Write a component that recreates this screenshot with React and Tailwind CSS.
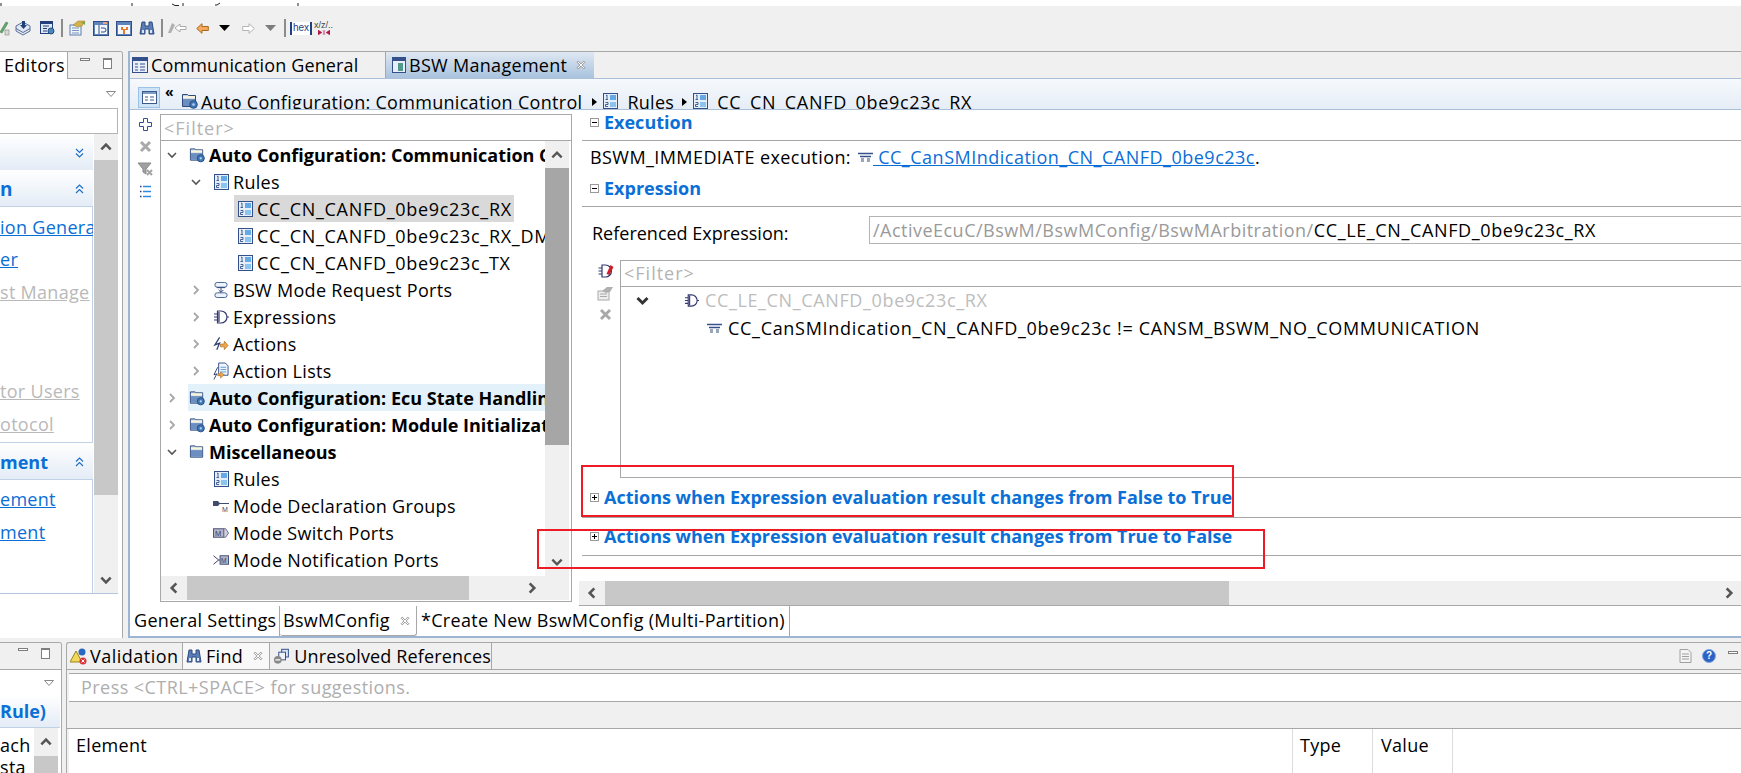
import React from "react";

const Chev = ({ d = "down", c = "#555", s = 2, w = 12 }) => {
  const p = { down: "M2 4l4 4 4-4", up: "M2 8l4-4 4 4", left: "M8 2L4 6l4 4", right: "M4 2l4 4-4 4" }[d];
  return <svg width={w} height={w} viewBox="0 0 12 12"><path d={p} fill="none" stroke={c} strokeWidth={s} /></svg>;
};
const Rules = () => (
  <svg width="15" height="16" viewBox="0 0 15 16"><rect x=".5" y=".5" width="14" height="15" fill="#e6eef8" stroke="#34508a" /><rect x="7" y="2" width="6" height="5" fill="#63a9e6" /><rect x="7" y="9" width="6" height="5" fill="#8cc4f0" /><path d="M3 2.500l1-.5v4M2.500 6.500h2.500M2.500 9.500h2.500v2h-2.500v2h2.500" fill="none" stroke="#34508a" strokeWidth=".9" /></svg>
);
const FolderGear = ({ gear = true }) => (
  <svg width="17" height="16" viewBox="0 0 17 16"><path d="M1.500 1.500v12h13v-11h-7l-1-1z" fill="#b9cee8" stroke="#2f4a7c" /><rect x="2" y="3" width="12" height="2.500" fill="#f6f3de" /><rect x="2" y="6" width="12" height="7" fill="#6c8fc2" />{gear && <><circle cx="12.500" cy="11.500" r="3.800" fill="#3f78b5" stroke="#2a4c80" /><circle cx="12.500" cy="11.500" r="1.200" fill="#b9d4ef" /></>}</svg>
);
const Gate = ({ c = "#34386e", w = 16 }) => (
  <svg width={w} height={w} viewBox="0 0 16 16"><path d="M4.500 2h3.500a6 6 0 010 12h-3.500zM6 3v10M1 5h3.500M1 8h3.500M1 11h3.500M14 8h2" fill="none" stroke={c} strokeWidth="1.200" /></svg>
);
const Bus = () => (
  <svg width="15" height="12" viewBox="0 0 15 12"><path d="M0 2.500h15M2 5.500h11" stroke="#36508a" strokeWidth="1.300" /><rect x="3" y="7" width="3" height="4" fill="#9aa7b8" /><rect x="9" y="7" width="3" height="4" fill="#9aa7b8" /></svg>
);
const ModeReq = () => (
  <svg width="17" height="18" viewBox="0 0 17 18"><rect x="2" y="1" width="13" height="5" rx="2.500" fill="#eef4fb" stroke="#3f5d90" /><rect x="2" y="12" width="13" height="5" rx="2.500" fill="#eef4fb" stroke="#3f5d90" /><path d="M4 6.500h9M8.500 7v4M6 9l2.500 2.500L11 9" fill="none" stroke="#2a3f70" /></svg>
);
const ActionIcon = () => (
  <svg width="17" height="16" viewBox="0 0 17 16"><path d="M7 1L2 9l5-2-3 7" fill="none" stroke="#2c3f72" strokeWidth="1.300" /><path d="M8 8h4V5l4 4.500-4 4.500v-3H8z" fill="#f0a848" stroke="#a86a20" strokeWidth=".7" /></svg>
);
const ActionList = () => (
  <svg width="17" height="20" viewBox="0 0 17 20"><path d="M6 1.500h7l3 3v10H6z" fill="#f2f6fb" stroke="#35508a" /><path d="M8 6h6M8 8.500h6M8 11h6" stroke="#4f9ad8" /><path d="M5 6L1 14l3-1-3 6" fill="none" stroke="#2c3f72" /><path d="M5 13h3v-2l4 3-4 3.500V15H5z" fill="#f0a848" stroke="#a86a20" strokeWidth=".6" /></svg>
);
const ModeGroup = () => (
  <svg width="16" height="14" viewBox="0 0 16 14"><path d="M0 2h5l2 2.500L5 7H0z" fill="#424a70" /><path d="M6 4.500h10" stroke="#424a70" /><text x="9" y="13" fontSize="7" fill="#424a70" fontFamily="Liberation Sans">M</text></svg>
);
const ModeSwitch = () => (
  <svg width="17" height="12" viewBox="0 0 17 12"><rect x=".5" y="1.500" width="11" height="9" fill="#b4b6c8" stroke="#444a70" /><text x="2.200" y="9" fontSize="8" fill="#333a60" fontFamily="Liberation Sans">M</text><path d="M11.500 1.500h2l3 4.500-3 4.500h-2z" fill="#cfd0dc" stroke="#6a6e8c" /></svg>
);
const ModeNotif = () => (
  <svg width="17" height="12" viewBox="0 0 17 12"><path d="M.5 1.500L6 6 .5 10.500M6 6h2" fill="none" stroke="#333a60" /><rect x="7.500" y="1.500" width="9" height="9" fill="#b4b6c8" stroke="#444a70" /><text x="8.500" y="9" fontSize="7" fill="#333a60" fontFamily="Liberation Sans">M</text></svg>
);
const Plus = () => (
  <svg width="13" height="13" viewBox="0 0 13 13"><path d="M4.500 .5h4v4h4v4h-4v4h-4v-4h-4v-4h4z" fill="#fff" stroke="#33518f" /></svg>
);
const Cross = ({ w = 13 }) => (
  <svg width={w} height={w} viewBox="0 0 13 13"><path d="M2 2l9 9M11 2l-9 9" stroke="#a9a9a9" strokeWidth="3" /></svg>
);
const Funnel = () => (
  <svg width="17" height="14" viewBox="0 0 17 14"><path d="M1 1h13L9 7v5L6 10V7z" fill="#a0a0a0" stroke="#8a8a8a" /><path d="M10 8l5 5M15 8l-5 5" stroke="#a4a4a4" strokeWidth="2" /></svg>
);
const ListIcon = () => (
  <svg width="11" height="13" viewBox="0 0 11 13"><path d="M3 1.500h8M3 6.500h8M3 11.500h8" stroke="#2f8ae0" strokeWidth="1.600" /><path d="M0 1.500h1.500M0 6.500h1.500M0 11.500h1.500" stroke="#1d3d80" strokeWidth="1.600" /></svg>
);
const CloseX = () => (
  <svg width="10" height="10" viewBox="0 0 9 9"><path d="M1 2l1-1 2.500 2.500L7 1l1 1-2.500 2.500L8 7 7 8 4.500 5.500 2 8 1 7l2.500-2.500z" fill="#fff" stroke="#7c7c7c" strokeWidth=".7" /></svg>
);
const Min = () => <div className="w-[10px] h-[3px] border border-[#7e7e7e] bg-white" />;
const Max = () => <div className="w-[9px] h-[11px] border border-[#7e7e7e] border-t-2 bg-white" />;
const TriDown = ({ c = "#000", w = 11, h = 6 }) => (
  <svg width={w} height={h} viewBox="0 0 11 6"><path d="M0 0h11L5.500 6z" fill={c} /></svg>
);
const HollowTri = () => (
  <svg width="10" height="6" viewBox="0 0 10 6"><path d="M.5.5h9L5 5.500z" fill="#fff" stroke="#888" /></svg>
);
const TreeBox = ({ sign }) => (
  <div className="w-[9px] h-[9px] border border-[#9a9a9a] bg-white flex items-center justify-center relative shrink-0">
    <div className="w-[5px] h-px bg-black" />
    {sign === "+" && <div className="absolute w-px h-[5px] bg-black" />}
  </div>
);
const Binoculars = () => (
  <svg width="16" height="15" viewBox="0 0 16 15"><path d="M3 1h3v4h4V1h3l2 12h-5V8H6v5H1z" fill="#5a7db5" stroke="#2f4a80" /><rect x="3" y="9" width="2" height="3" fill="#dbe6f4" /><rect x="11" y="9" width="2" height="3" fill="#dbe6f4" /></svg>
);

const TBSep = ({ ml }) => <div className={`w-[2px] h-[18px] bg-[#8c8c8c] shrink-0 ${ml}`} />;
const Slot = ({ w, ml = "", children }) => <div className={`flex justify-center items-center shrink-0 ${w} ${ml}`}>{children}</div>;

const Toolbar = () => (
  <div className="h-[44px] flex items-center bg-[#f0f0f0] shrink-0">
    <Slot w="w-[10px]"><svg width="10" height="16" viewBox="0 0 10 16"><path d="M0 12L6 2l2 1-6 10z" fill="#64a86c" stroke="#3f7d48" strokeWidth=".6" /><rect x="5" y="10" width="4" height="5" fill="#d8d8d8" stroke="#888" strokeWidth=".6" /></svg></Slot>
    <Slot w="w-[26px]"><svg width="16" height="16" viewBox="0 0 16 16"><path d="M1 6l7-4 7 4v5l-7 4-7-4z" fill="#dfe7f3" stroke="#5a6f99" /><path d="M1 8.500l7 4 7-4" fill="none" stroke="#5a6f99" /><path d="M7 1h3v4h2L8.500 9 5 5h2z" fill="#20407a" /></svg></Slot>
    <Slot w="w-[22px]"><svg width="15" height="14" viewBox="0 0 15 14"><rect x=".5" y=".5" width="12" height="12" fill="#dfe8f5" stroke="#24407c" /><rect x="1" y="1" width="11" height="2" fill="#24407c" /><path d="M3 5h6M3 7.500h4M3 10h4" stroke="#24407c" /><circle cx="11" cy="10" r="3" fill="#4d86bd" stroke="#24507f" /></svg></Slot>
    <TBSep ml="ml-[3px]" />
    <Slot w="w-[23px]" ml="ml-[3px]"><svg width="17" height="16" viewBox="0 0 17 16"><rect x="1" y="5" width="11" height="10" fill="#eef3fa" stroke="#5c7cae" /><path d="M3 8h7M3 10.500h7M3 13h7" stroke="#7d98bf" /><path d="M4 5l5-4h7l-3 5-4 1z" fill="#d2b04e" stroke="#a88a2c" strokeWidth=".6" /><path d="M12 2h4v3z" fill="#76a24a" /></svg></Slot>
    <Slot w="w-[23px]"><svg width="16" height="15" viewBox="0 0 16 15"><rect x=".5" y=".5" width="15" height="14" fill="#5f83bb" stroke="#2f4e86" /><rect x="2" y="4" width="12" height="9" fill="#f3f7fc" /><path d="M6 4v9M8 7h3a2 2 0 010 4H8" fill="none" stroke="#2f4e86" /><rect x="10" y="1" width="4" height="2" fill="#e8a47c" /></svg></Slot>
    <Slot w="w-[23px]"><svg width="16" height="15" viewBox="0 0 16 15"><rect x=".5" y=".5" width="15" height="14" fill="#5f83bb" stroke="#2f4e86" /><rect x="2" y="4" width="12" height="9" fill="#f3f7fc" /><path d="M5 6v3h2v4h2V9h3V6h-2v2H7V6z" fill="#e8792a" /></svg></Slot>
    <Slot w="w-[23px]"><Binoculars /></Slot>
    <TBSep ml="ml-[3px]" />
    <Slot w="w-[28px]"><svg width="20" height="14" viewBox="0 0 20 14"><path d="M1 12L5 2l3 2-4 8z" fill="#b0b0b0" /><path d="M8 7l5-4v2.500h6v3h-6V11z" fill="#fff" stroke="#aaa" /></svg></Slot>
    <Slot w="w-[22px]"><svg width="13" height="11" viewBox="0 0 13 11"><path d="M.7 5.500L6 .7v2.800h6.300v4H6v2.800z" fill="#f6a95a" stroke="#a86a20" /></svg></Slot>
    <Slot w="w-[22px]"><TriDown /></Slot>
    <Slot w="w-[26px]"><svg width="13" height="11" viewBox="0 0 13 11"><path d="M12.300 5.500L7 .7v2.800H.7v4H7v2.800z" fill="#fff" stroke="#b4b4b4" /></svg></Slot>
    <Slot w="w-[18px]"><TriDown c="#7d7d7d" /></Slot>
    <TBSep ml="ml-[5px]" />
    <Slot w="w-[30px]"><div className="h-[13px] px-[1px] bg-white border-x-2 border-[#1f3f7f] text-[#1f3f7f] text-[10px] leading-[12px] tracking-normal font-['Liberation_Sans',sans-serif]">hex</div></Slot>
    <Slot w="w-[15px]"><div className="flex flex-col items-center"><span className="text-[9px] leading-[9px] tracking-normal text-[#444] font-['Liberation_Sans',sans-serif] whitespace-nowrap">x/z/..</span><svg width="12" height="5" viewBox="0 0 12 5"><path d="M0 0l4 2.500L0 5zM12 0L8 2.500 12 5zM5 0l2 5M7 0L5 5" fill="#b01848" stroke="#b01848" strokeWidth=".5" /></svg></div></Slot>
  </div>
);

const Header = ({ children, chev = "up" }) => (
  <div className="h-[36px] pt-[2px] bg-gradient-to-b from-white to-[#e4ecf6] flex items-center relative shrink-0 font-bold tracking-normal text-[#0a6fd6]">
    <span className="whitespace-nowrap">{children}</span>
    <svg className="absolute right-[9px]" width="9" height="10" viewBox="0 0 9 10">{chev === "up"
      ? <path d="M1 4.500l3.500-3.500L8 4.500M1 9l3.500-3.500L8 9" fill="none" stroke="#1f6fc8" strokeWidth="1.200" />
      : <path d="M1 1l3.500 3.500L8 1M1 5.500L4.500 9 8 5.500" fill="none" stroke="#1f6fc8" strokeWidth="1.200" />}</svg>
  </div>
);

const LLink = ({ gray, children, cls = "" }) => (
  <div className={`whitespace-nowrap underline leading-[24px] ${gray ? "text-[#b9b9b9]" : "text-[#0b6ed6]"} ${cls}`}>{children}</div>
);

const LeftPanel = () => (
  <div className="w-[123px] shrink-0 border-r border-t border-[#a8a8a8] rounded-tr-[3px] flex flex-col bg-white overflow-hidden">
    <div className="h-[27px] flex items-center bg-[#f0f0f0] relative shrink-0">
      <div className="w-[68px] h-full bg-white border-r border-[#a8a8a8] pl-[4px] leading-[26px] whitespace-nowrap">Editors</div>
      <div className="flex-1 h-full border-b border-[#a8a8a8] flex items-start gap-[13px] pl-[12px] pt-[6px]"><Min /><Max /></div>
    </div>
    <div className="h-[29px] shrink-0 flex justify-end items-center pr-[6px]"><HollowTri /></div>
    <div className="h-[26px] w-[118px] border border-[#b4b4b4] border-l-0 shrink-0 bg-white" />
    <div className="w-[118px] h-[460px] flex border-b border-[#b4c6dc] shrink-0">
      <div className="w-[93px] flex flex-col overflow-hidden">
        <Header chev="down"> </Header>
        <Header chev="up"><span className="text-[19px]">n</span></Header>
        <div className="h-[237px] border-y border-r border-[#c0d2e6] pt-[8px] shrink-0">
          <LLink>ion Genera</LLink>
          <LLink cls="mt-[8px]">er</LLink>
          <LLink gray cls="mt-[9px]">st Manage</LLink>
          <LLink gray cls="mt-[75px]">tor Users</LLink>
          <LLink gray cls="mt-[9px]">otocol</LLink>
        </div>
        <Header chev="up"><span>ment</span></Header>
        <div className="flex-1 border-t border-r border-[#c0d2e6] pt-[7px]">
          <LLink>ement</LLink>
          <LLink cls="mt-[9px]">ment</LLink>
        </div>
      </div>
      <div className="w-[24px] ml-px bg-[#f0f0f0] flex flex-col">
        <div className="h-[26px] flex items-center justify-center"><Chev d="up" s={2.200} w={14} /></div>
        <div className="h-[335px] bg-[#c8c8c8]" />
        <div className="flex-1 flex items-end justify-center pb-[6px]"><Chev d="down" s={2.200} w={14} /></div>
      </div>
    </div>
    <div className="flex-1" />
  </div>
);

const Row = ({ pl, arrow, icon, text, bold, hl, id }) => (
  <div className={`h-[27px] flex items-center whitespace-nowrap shrink-0 ${pl}`}>
    <div className="w-[16px] flex justify-center shrink-0">
      {arrow === "open" && <Chev d="down" c="#555" s={1.600} w={12} />}
      {arrow === "closed" && <Chev d="right" c="#a8a8a8" s={1.800} w={12} />}
    </div>
    <div className={`flex items-center h-full ${hl === "row" ? "bg-[#e3f1fb] flex-1 pl-[1px] ml-[8px]" : hl === "text" ? "bg-[#d9d9d9] w-[280px] pl-[3px] ml-[6px]" : "ml-[9px]"}`}>
      <div className="flex justify-center shrink-0 w-[16px]">{icon}</div>
      <div className={`h-full leading-[29px] ml-[4px] ${bold ? "font-bold tracking-normal" : ""} ${id ? "tracking-[0.7px]" : ""}`}>{text}</div>
    </div>
  </div>
);

const Tree = () => (
  <div className="flex-1 min-w-0 overflow-hidden flex flex-col">
    <Row pl="pl-[3px]" arrow="open" icon={<FolderGear />} text="Auto Configuration: Communication Control" bold />
    <Row pl="pl-[27px]" arrow="open" icon={<Rules />} text="Rules" />
    <Row pl="pl-[51px]" icon={<Rules />} text="CC_CN_CANFD_0be9c23c_RX" hl="text" id />
    <Row pl="pl-[51px]" icon={<Rules />} text="CC_CN_CANFD_0be9c23c_RX_DM" id />
    <Row pl="pl-[51px]" icon={<Rules />} text="CC_CN_CANFD_0be9c23c_TX" id />
    <Row pl="pl-[27px]" arrow="closed" icon={<ModeReq />} text="BSW Mode Request Ports" />
    <Row pl="pl-[27px]" arrow="closed" icon={<Gate />} text="Expressions" />
    <Row pl="pl-[27px]" arrow="closed" icon={<ActionIcon />} text="Actions" />
    <Row pl="pl-[27px]" arrow="closed" icon={<ActionList />} text="Action Lists" />
    <Row pl="pl-[3px]" arrow="closed" icon={<FolderGear />} text="Auto Configuration: Ecu State Handling" bold hl="row" />
    <Row pl="pl-[3px]" arrow="closed" icon={<FolderGear />} text="Auto Configuration: Module Initialization" bold />
    <Row pl="pl-[3px]" arrow="open" icon={<FolderGear gear={false} />} text="Miscellaneous" bold />
    <Row pl="pl-[27px]" icon={<Rules />} text="Rules" />
    <Row pl="pl-[27px]" icon={<ModeGroup />} text="Mode Declaration Groups" />
    <Row pl="pl-[27px]" icon={<ModeSwitch />} text="Mode Switch Ports" />
    <Row pl="pl-[27px]" icon={<ModeNotif />} text="Mode Notification Ports" />
  </div>
);

const MasterPane = () => (
  <div className="w-[450px] shrink-0 flex pt-[4px]">
    <div className="w-[30px] shrink-0 flex flex-col items-center pt-[4px] gap-[9px]">
      <Plus /><Cross /><Funnel /><ListIcon />
    </div>
    <div className="w-[412px] h-[488px] border border-[#a8a8a8] flex flex-col">
      <div className="h-[26px] border-b border-[#a8a8a8] pl-[3px] text-[#b4b4b4] tracking-[1px] leading-[27px] shrink-0">&lt;Filter&gt;</div>
      <div className="flex h-[435px] pr-[2px] shrink-0">
        <Tree />
        <div className="w-[24px] bg-[#f0f0f0] flex flex-col shrink-0">
          <div className="h-[27px] flex items-center justify-center"><Chev d="up" s={2} w={14} /></div>
          <div className="h-[277px] bg-[#a6a6a6]" />
          <div className="flex-1 flex items-end justify-center pb-[7px]"><Chev d="down" s={2} w={14} /></div>
        </div>
      </div>
      <div className="h-[24px] bg-[#f0f0f0] flex items-center mr-[2px] shrink-0">
        <div className="w-[26px] flex justify-center"><Chev d="left" s={2.200} w={14} /></div>
        <div className="w-[282px] h-full bg-[#c8c8c8]" />
        <div className="flex-1 flex justify-end pr-[30px]"><Chev d="right" s={2.200} w={14} /></div>
      </div>
    </div>
  </div>
);

const SecHead = ({ sign, h, children }) => (
  <div className={`${h} border-b border-[#a6a6a6] flex items-center pl-[8px] shrink-0`}>
    <TreeBox sign={sign} />
    <span className="ml-[5px] font-bold tracking-normal text-[#0a6fd6] whitespace-nowrap">{children}</span>
  </div>
);

const DetailPane = () => (
  <div className="flex-1 min-w-0 flex flex-col">
    <div className="h-[471px] pl-[2px] flex flex-col shrink-0 overflow-hidden">
      <SecHead sign="-" h="h-[31px] pb-[6px]">Execution</SecHead>
      <div className="h-[32px] flex items-center pl-[8px] whitespace-nowrap shrink-0">
        <span className="tracking-[0.42px]">BSWM_IMMEDIATE execution:</span>
        <span className="ml-[7px]"><Bus /></span>
        <a className="underline text-[#0b6ed6] whitespace-pre tracking-[0.5px]"> CC_CanSMIndication_CN_CANFD_0be9c23c</a>
        <span>.</span>
      </div>
      <SecHead sign="-" h="h-[34px] pb-[3px]">Expression</SecHead>
      <div className="h-[37px] flex items-end pl-[10px] shrink-0">
        <span className="w-[277px] leading-[20px] mb-[1px] shrink-0 whitespace-nowrap tracking-normal">Referenced Expression:</span>
        <div className="flex-1 h-[28px] border-y border-l border-[#b4b4b4] pl-[3px] leading-[26px] whitespace-nowrap text-[#9a9a9a] tracking-[0.48px]">/ActiveEcuC/BswM/BswMConfig/BswMArbitration/<span className="text-black tracking-[0.63px]">CC_LE_CN_CANFD_0be9c23c_RX</span></div>
      </div>
      <div className="flex mt-[16px] shrink-0">
        <div className="w-[38px] shrink-0 flex flex-col items-center pl-[8px] pt-[3px] gap-[7px]">
          <svg width="17" height="16" viewBox="0 0 16 16"><path d="M4.500 2h3.500a6 6 0 010 12h-3.500zM1 5h3.500M1 8h3.500M1 11h3.500" fill="none" stroke="#34386e" strokeWidth="1.200" /><path d="M9 11l4-9 3 2-4 8z" fill="#c8202c" /></svg>
          <svg width="17" height="15" viewBox="0 0 17 15"><rect x="1" y="5" width="11" height="9" fill="#eee" stroke="#aaa" /><path d="M3 8h7M3 10.500h7" stroke="#aaa" /><path d="M5 5l5-4h6l-3 5-4 1z" fill="#b0b0b0" /></svg>
          <Cross />
        </div>
        <div className="flex-1 h-[218px] border-y border-l border-[#a8a8a8] flex flex-col">
          <div className="h-[26px] border-b border-[#a8a8a8] pl-[3px] text-[#b4b4b4] tracking-[1px] leading-[25px] shrink-0">&lt;Filter&gt;</div>
          <div className="h-[27px] flex items-center pl-[14px] whitespace-nowrap">
            <Chev d="down" c="#333" s={2.400} w={15} />
            <div className="ml-[34px]"><Gate w={15} /></div>
            <span className="ml-[6px] text-[#bdbdbd] tracking-[0.63px]">CC_LE_CN_CANFD_0be9c23c_RX</span>
          </div>
          <div className="h-[28px] flex items-center pl-[86px] whitespace-nowrap">
            <Bus />
            <span className="ml-[6px] tracking-[0.69px]">CC_CanSMIndication_CN_CANFD_0be9c23c != CANSM_BSWM_NO_COMMUNICATION</span>
          </div>
        </div>
      </div>
      <SecHead sign="+" h="h-[40px]">Actions when Expression evaluation result changes from False to True</SecHead>
      <SecHead sign="+" h="h-[38px]">Actions when Expression evaluation result changes from True to False</SecHead>
    </div>
    <div className="h-[25px] bg-[#f0f0f0] border-b border-[#a8a8a8] flex items-center ml-[-1px] shrink-0">
      <div className="w-[26px] flex justify-center"><Chev d="left" s={2.200} w={14} /></div>
      <div className="w-[624px] h-full bg-[#c8c8c8]" />
      <div className="flex-1 flex justify-end pr-[5px]"><Chev d="right" s={2.200} w={14} /></div>
    </div>
  </div>
);

const EditorPanel = () => (
  <div className="flex-1 min-w-0 flex flex-col border-l-2 border-b-2 border-[#9cb5d2] bg-white overflow-hidden ml-[5px] h-[587px]">
    <div className="h-[27px] border-t border-[#a8a8a8] bg-[#f0f0f0] flex shrink-0">
      <div className="w-[256px] flex items-center pl-[2px] whitespace-nowrap border-r border-[#a8a8a8] tracking-[0.14px]">
        <svg width="16" height="16" viewBox="0 0 16 16"><rect x=".5" y=".5" width="15" height="15" fill="#e9eff8" stroke="#34508a" /><rect x="1" y="1" width="14" height="3" fill="#34508a" /><path d="M3 7h3M8 7h5M3 10h3M8 10h5M3 13h3M8 13h5" stroke="#34508a" /></svg>
        <span className="ml-[3px]">Communication General</span>
      </div>
      <div className="w-[208px] flex items-center pl-[6px] whitespace-nowrap bg-gradient-to-b from-[#dfe8f2] to-[#a9c2de]">
        <svg width="14" height="16" viewBox="0 0 14 16"><rect x=".5" y=".5" width="13" height="15" fill="#e9eff8" stroke="#34508a" /><rect x="1" y="1" width="12" height="3" fill="#34508a" /><rect x="6" y="6" width="5" height="8" fill="#4f9a8c" /></svg>
        <span className="ml-[3px]">BSW Management</span>
        <span className="ml-[9px]"><CloseX /></span>
      </div>
      <div className="flex-1" />
    </div>
    <div className="h-[32px] border-y border-y-[#a9c0d8] bg-gradient-to-b from-[#f6f9fc] to-[#e6edf6] flex items-start overflow-hidden whitespace-nowrap shrink-0">
      <div className="w-[22px] h-[21px] ml-[8px] mt-[8px] bg-[#cfe3f6] border border-[#9cc2e6] flex items-center justify-center shrink-0">
        <svg width="15" height="13" viewBox="0 0 15 13"><rect x=".5" y=".5" width="14" height="12" fill="#fff" stroke="#3d5a8c" /><rect x="1" y="1" width="13" height="2" fill="#7d9cc4" /><path d="M3 6h3M3 9h3M8 6h4M8 9h4" stroke="#3d5a8c" /></svg>
      </div>
      <span className="ml-[5px] mt-[6px] text-[14px] leading-[14px] font-bold">«</span>
      <span className="ml-[7px] mt-[14px]"><FolderGear /></span>
      <span className="ml-[3px] mt-[11px] leading-[24px]">Auto Configuration: Communication Control</span>
      <span className="ml-[10px] mt-[19px] w-0 h-0 border-y-[4px] border-y-transparent border-l-[5px] border-l-black" />
      <span className="ml-[6px] mt-[14px]"><Rules /></span>
      <span className="ml-[9px] mt-[11px] leading-[24px]">Rules</span>
      <span className="ml-[8px] mt-[19px] w-0 h-0 border-y-[4px] border-y-transparent border-l-[5px] border-l-black" />
      <span className="ml-[6px] mt-[14px]"><Rules /></span>
      <span className="ml-[9px] mt-[11px] leading-[24px] tracking-[0.7px]">CC_CN_CANFD_0be9c23c_RX</span>
    </div>
    <div className="h-[496px] flex shrink-0">
      <MasterPane />
      <DetailPane />
    </div>
    <div className="flex-1 flex items-stretch whitespace-nowrap">
      <div className="w-[150px] pl-[4px] border-r border-[#a8a8a8] leading-[28px]">General Settings</div>
      <div className="w-[137px] pl-[3px] border-r border-b border-[#a8a8a8] rounded-b-[3px] flex items-center">
        <span>BswMConfig</span><span className="ml-[10px]"><CloseX /></span>
      </div>
      <div className="w-[373px] pl-[4px] border-r border-[#a8a8a8] leading-[28px]">*Create New BswMConfig (Multi-Partition)</div>
    </div>
  </div>
);

const BottomLeft = () => (
  <div className="w-[62px] shrink-0 border-t border-r border-[#a8a8a8] bg-white flex flex-col overflow-hidden rounded-tr-[3px]">
    <div className="h-[27px] bg-[#f0f0f0] border-b border-[#a8a8a8] flex items-start justify-end gap-[13px] pr-[11px] pt-[5px] shrink-0"><Min /><Max /></div>
    <div className="h-[25px] flex justify-end items-center pr-[7px] shrink-0"><HollowTri /></div>
    <div className="h-[33px] bg-gradient-to-b from-white to-[#e4ecf6] border-b border-[#c0d2e6] font-bold tracking-normal text-[#0a6fd6] flex items-center shrink-0 w-[60px] whitespace-nowrap">Rule)</div>
    <div className="flex flex-1 w-[58px]">
      <div className="w-[34px] pt-[6px] leading-[22px] overflow-hidden whitespace-nowrap">
        <div>ach</div>
        <div>sta</div>
      </div>
      <div className="w-[24px] bg-[#f0f0f0] flex flex-col">
        <div className="h-[28px] flex items-center justify-center"><Chev d="up" s={2.200} w={14} /></div>
        <div className="flex-1 bg-[#c8c8c8]" />
      </div>
    </div>
  </div>
);

const BTab = ({ w, active, icon, text, close, tml = "ml-[2px]", track = "" }) => (
  <div className={`${w} h-full flex items-center pl-[3px] border-r border-[#a8a8a8] whitespace-nowrap ${active ? "bg-[#f8f8f8]" : ""}`}>
    {icon}<span className={`${tml} ${track}`}>{text}</span>{close && <span className="ml-[10px]"><CloseX /></span>}
  </div>
);

const BottomRight = () => (
  <div className="flex-1 min-w-0 ml-[4px] flex flex-col border-t border-l border-[#a8a8a8] overflow-hidden rounded-tl-[3px]">
    <div className="h-[27px] border-b border-[#a8a8a8] flex shrink-0">
      <BTab w="w-[116px]" text="Validation" track="tracking-[0.5px]" icon={<svg width="18" height="17" viewBox="0 0 18 17"><path d="M6 3l6 11H0z" fill="#f2d85a" stroke="#9a8420" /><circle cx="12" cy="4" r="3.500" fill="#2a68c0" /><circle cx="13" cy="13" r="3.500" fill="#d8343c" /><path d="M11.500 11.500l3 3M14.500 11.500l-3 3" stroke="#fff" /></svg>} />
      <BTab w="w-[87px]" active text="Find" close tml="ml-[4px]" icon={<Binoculars />} />
      <BTab w="w-[222px]" text="Unresolved References" tml="ml-[4px]" track="tracking-[0.15px]" icon={<svg width="18" height="17" viewBox="0 0 18 17"><rect x="9" y="1" width="7" height="8" fill="#dbe6f4" stroke="#2f4e86" /><rect x="6" y="4" width="7" height="8" fill="#eef3fa" stroke="#2f4e86" /><circle cx="5" cy="12" r="4" fill="#888" /><path d="M2.500 12h5" stroke="#fff" strokeWidth="1.500" /></svg>} />
      <div className="flex-1 flex items-center justify-end pr-[3px] gap-[10px]">
        <svg width="13" height="14" viewBox="0 0 13 14"><path d="M1 .5h8l3 3V13.500H1z" fill="#f4f4f4" stroke="#a0a0a0" /><path d="M3 5h7M3 7.500h7M3 10h7" stroke="#a0a0a0" /></svg>
        <div className="w-[14px] h-[14px] rounded-full bg-[#2d62c4] border border-[#7fa6e2] text-white text-[10px] leading-[12px] font-bold text-center tracking-normal font-['Liberation_Sans',sans-serif]">?</div>
        <div className="mb-[8px] ml-[2px]"><Min /></div>
      </div>
    </div>
    <div className="h-[3px] shrink-0" />
    <div className="h-[29px] bg-white border-y border-[#a8a8a8] ml-[2px] pl-[12px] leading-[26px] text-[#aeaeae] tracking-[0.45px] whitespace-nowrap shrink-0">Press &lt;CTRL+SPACE&gt; for suggestions.</div>
    <div className="h-[27px] shrink-0 border-b border-[#a8a8a8]" />
    <div className="flex-1 bg-white flex ml-[2px] leading-[32px]">
      <div className="w-[1224px] pl-[7px] border-r border-[#dcdcdc]">Element</div>
      <div className="w-[80px] pl-[7px] border-r border-[#dcdcdc]">Type</div>
      <div className="w-[80px] pl-[8px] border-r border-[#dcdcdc]">Value</div>
    </div>
  </div>
);

export default function App() {
  return (
    <div className="relative w-[1741px] h-[773px] overflow-hidden bg-[#f0f0f0] text-black text-[18px] tracking-[0.3px] font-['Open_Sans',sans-serif]">
      <div className="h-[6px] bg-white shrink-0">
        <svg width="340" height="6" viewBox="0 0 340 6"><path d="M1 3v3M132 3v3M172 4l3 1.500h4M183 3v3M220 3l-3 2h-2M298 3v3" fill="none" stroke="#222" /></svg>
      </div>
      <Toolbar />
      <div className="h-[1px]" />
      <div className="flex h-[587px]">
        <LeftPanel />
        <EditorPanel />
      </div>
      <div className="h-[4px]" />
      <div className="flex h-[131px]">
        <BottomLeft />
        <BottomRight />
      </div>
      <div className="absolute left-[581px] top-[465px] w-[653px] h-[52px] border-2 border-[#ed1c24]" />
      <div className="absolute left-[537px] top-[529px] w-[728px] h-[40px] border-2 border-[#ed1c24]" />
    </div>
  );
}
